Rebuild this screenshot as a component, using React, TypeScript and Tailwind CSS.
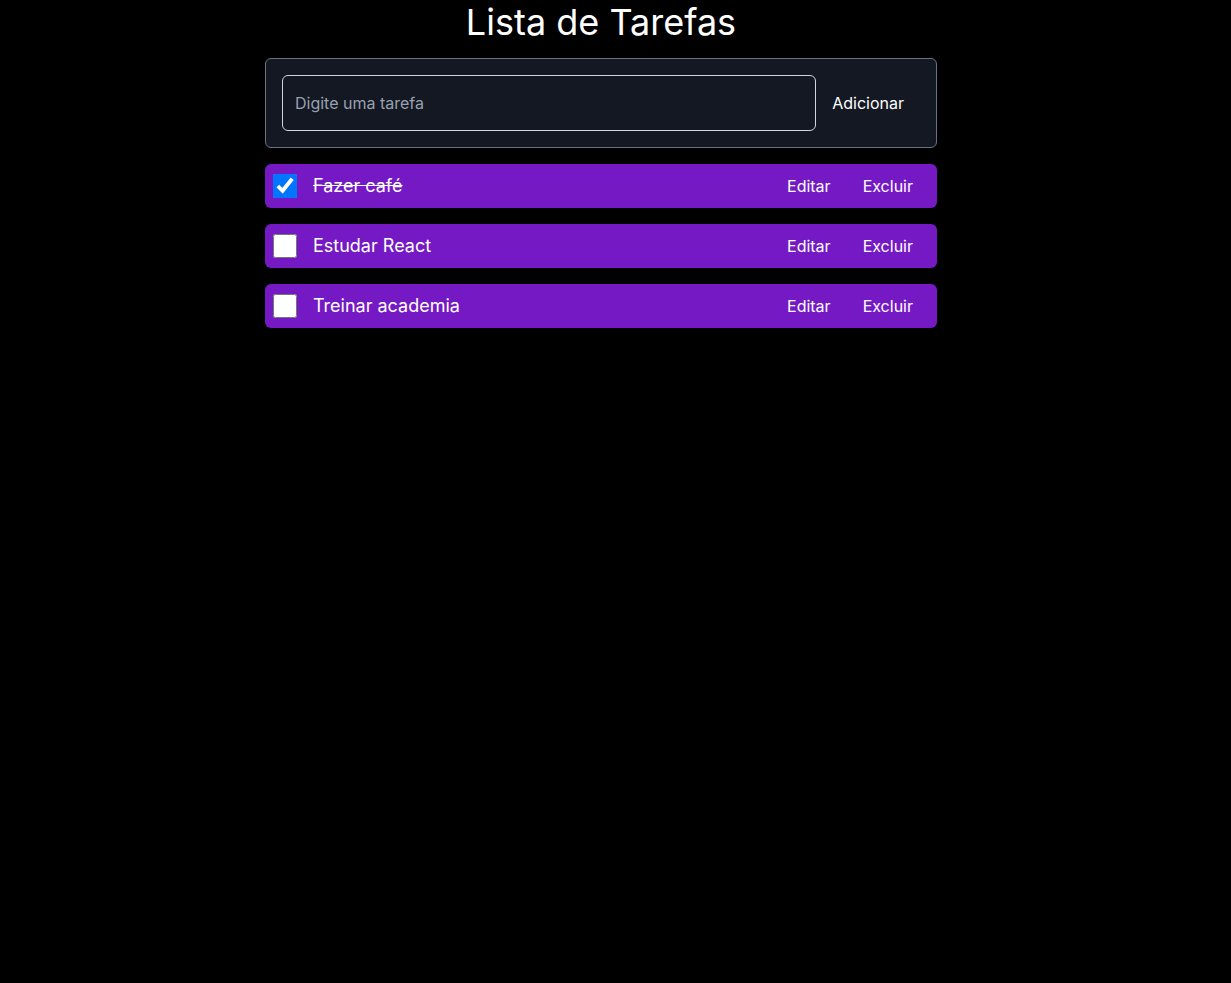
import { useState } from "react";

type Task = { id: number; text: string; done: boolean };

const initialTasks: Task[] = [
  { id: 1, text: "Fazer café", done: true },
  { id: 2, text: "Estudar React", done: false },
  { id: 3, text: "Treinar academia", done: false },
];

export default function App() {
  const [tasks, setTasks] = useState<Task[]>(initialTasks);
  const [value, setValue] = useState("");

  const addTask = () => {
    if (!value.trim()) return;
    setTasks([...tasks, { id: Date.now(), text: value.trim(), done: false }]);
    setValue("");
  };

  const toggle = (id: number) =>
    setTasks(tasks.map((t) => (t.id === id ? { ...t, done: !t.done } : t)));

  const remove = (id: number) => setTasks(tasks.filter((t) => t.id !== id));

  return (
    <div className="min-h-screen bg-black text-white font-['Inter',sans-serif]">
      <div className="flex w-[1202px] flex-col items-center">
        <h1 className="mt-[2px] text-4xl font-normal">Lista de Tarefas</h1>

        <div className="mt-4 w-[672px]">
          <div className="flex items-center rounded-md border border-gray-500 bg-[#131822] p-4">
            <input
              value={value}
              onChange={(e) => setValue(e.target.value)}
              placeholder="Digite uma tarefa"
              className="h-14 flex-1 rounded-md border border-gray-300 bg-transparent px-3 text-base text-white placeholder:text-gray-400 outline-none"
            />
            <button type="button" onClick={addTask} className="px-4 py-2 text-base text-white">
              Adicionar
            </button>
          </div>

          <ul className="mt-4 flex flex-col gap-4">
            {tasks.map((t) => (
              <li key={t.id} className="flex h-11 items-center rounded-md bg-[#7519c4] px-2">
                <input
                  type="checkbox"
                  checked={t.done}
                  onChange={() => toggle(t.id)}
                  className="m-0 h-6 w-6"
                />
                <span className={`ml-4 flex-1 text-lg ${t.done ? "line-through" : ""}`}>
                  {t.text}
                </span>
                <button type="button" className="px-4 text-base">
                  Editar
                </button>
                <button type="button" onClick={() => remove(t.id)} className="px-4 text-base">
                  Excluir
                </button>
              </li>
            ))}
          </ul>
        </div>
      </div>
    </div>
  );
}
